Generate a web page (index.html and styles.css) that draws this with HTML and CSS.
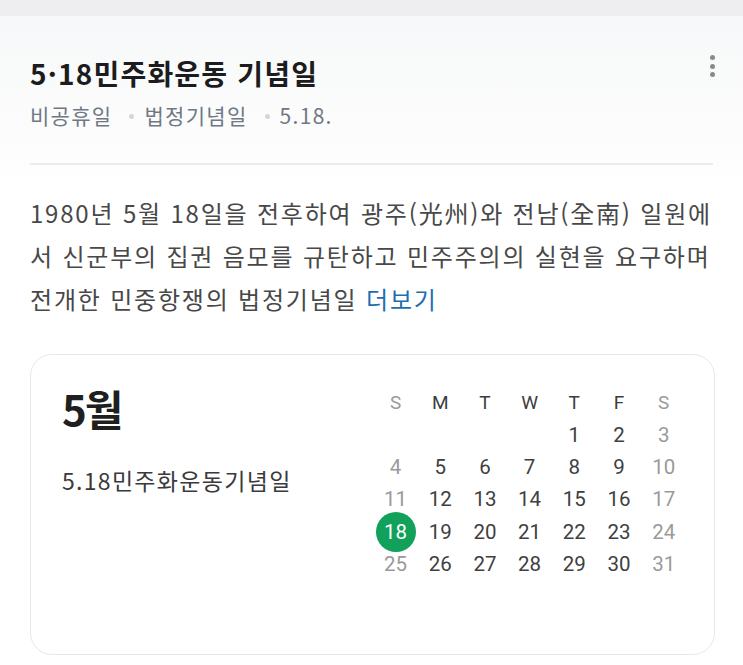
FILE: index.html
```html
<!DOCTYPE html>
<html lang="ko">
<head>
<meta charset="utf-8">
<link rel="stylesheet" href="styles.css">
</head>
<body>
<div class="topband"></div>
<main class="panel">
  <header class="head">
    <div class="head-text">
      <h1 class="title">5·18민주화운동 기념일</h1>
      <div class="meta">
        <span>비공휴일</span><span class="dot"></span><span>법정기념일</span><span class="dot"></span><span>5.18.</span>
      </div>
    </div>
    <div class="kebab"><i></i><i></i><i></i></div>
  </header>
  <hr class="sep">
  <p class="desc">1980년 5월 18일을 전후하여 광주(光州)와 전남(全南) 일원에<br>서 신군부의 집권 음모를 규탄하고 민주주의의 실현을 요구하며<br>전개한 민중항쟁의 법정기념일 <span class="more">더보기</span></p>
  <section class="card">
    <div class="card-left">
      <div class="month">5월</div>
      <div class="event">5.18민주화운동기념일</div>
    </div>
    <div class="cal">
      <span class="h we">S</span><span class="h">M</span><span class="h">T</span><span class="h">W</span><span class="h">T</span><span class="h">F</span><span class="h we">S</span>
      <span></span><span></span><span></span><span></span><span>1</span><span>2</span><span class="we">3</span>
      <span class="we">4</span><span>5</span><span>6</span><span>7</span><span>8</span><span>9</span><span class="we">10</span>
      <span class="we">11</span><span>12</span><span>13</span><span>14</span><span>15</span><span>16</span><span class="we">17</span>
      <span class="today"><b>18</b></span><span>19</span><span>20</span><span>21</span><span>22</span><span>23</span><span class="we">24</span>
      <span class="we">25</span><span>26</span><span>27</span><span>28</span><span>29</span><span>30</span><span class="we">31</span>
    </div>
  </section>
</main>
</body>
</html>
```
FILE: styles.css
```css
* { box-sizing: border-box; }
html, body { margin: 0; padding: 0; }
body {
  width: 743px;
  height: 665px;
  overflow: hidden;
  background: #ffffff;
  font-family: "Noto Sans CJK KR", "Noto Sans", sans-serif;
  color: #222;
}
.topband {
  height: 16px;
  background: #eeeef0;
}
.panel {
  background: linear-gradient(#f7f8f9 0px, #fdfdfd 140px, #ffffff 170px);
  padding: 0 30px;
}
.head {
  display: flex;
  justify-content: space-between;
  align-items: flex-start;
  padding-top: 36px;
}
.title {
  margin: 0;
  font-size: 28px;
  line-height: 42px;
  font-weight: 700;
  color: #1c1c1e;
  letter-spacing: 1.2px;
}
.meta {
  margin-top: 6px;
  display: flex;
  align-items: center;
  font-size: 21px;
  line-height: 30px;
  color: #6f7885;
  letter-spacing: 1.3px;
}
.meta .dot {
  width: 5px;
  height: 5px;
  border-radius: 50%;
  background: #d4d7db;
  margin: 2px 10px 0 17px;
}
.kebab {
  display: flex;
  flex-direction: column;
  gap: 3.5px;
  margin-top: 3px;
  margin-right: -2px;
}
.kebab i {
  width: 5px;
  height: 5px;
  border-radius: 50%;
  background: #8a8a8a;
}
.sep {
  margin: 33px 0 0;
  border: 0;
  height: 2px;
  background: #ececee;
}
.desc {
  margin: 26px 0 0;
  font-size: 24px;
  line-height: 43px;
  color: #484848;
  letter-spacing: 1.8px;
  white-space: nowrap;
}
.more { color: #1c6fae; }
.card {
  margin-top: 34px;
  width: 685px;
  height: 301px;
  border: 1.5px solid #e8e8ea;
  border-radius: 22px;
  display: flex;
  justify-content: space-between;
  padding: 24px 30px 0 31px;
}
.month {
  font-size: 42px;
  line-height: 58px;
  font-weight: 700;
  color: #1f1f1f;
  letter-spacing: -2px;
}
.event {
  margin-top: 28px;
  font-size: 23px;
  line-height: 30px;
  color: #3a3a3a;
  letter-spacing: 1.3px;
}
.cal {
  display: grid;
  grid-template-columns: repeat(7, 44.7px);
  grid-auto-rows: 32.4px;
  font-family: Roboto, "Noto Sans", sans-serif;
  font-size: 20.5px;
  color: #404040;
  margin-top: 7px;
  margin-right: -2px;
}
.cal span {
  display: flex;
  align-items: center;
  justify-content: center;
}
.cal .h { color: #3d3d3d; font-size: 19px; }
.cal .we { color: #9a9a9a; }
.cal .today b {
  font-weight: 400;
  width: 40px;
  height: 40px;
  border-radius: 50%;
  background: #12a15a;
  color: #ffffff;
  display: flex;
  align-items: center;
  justify-content: center;
  flex: none;
}
```
